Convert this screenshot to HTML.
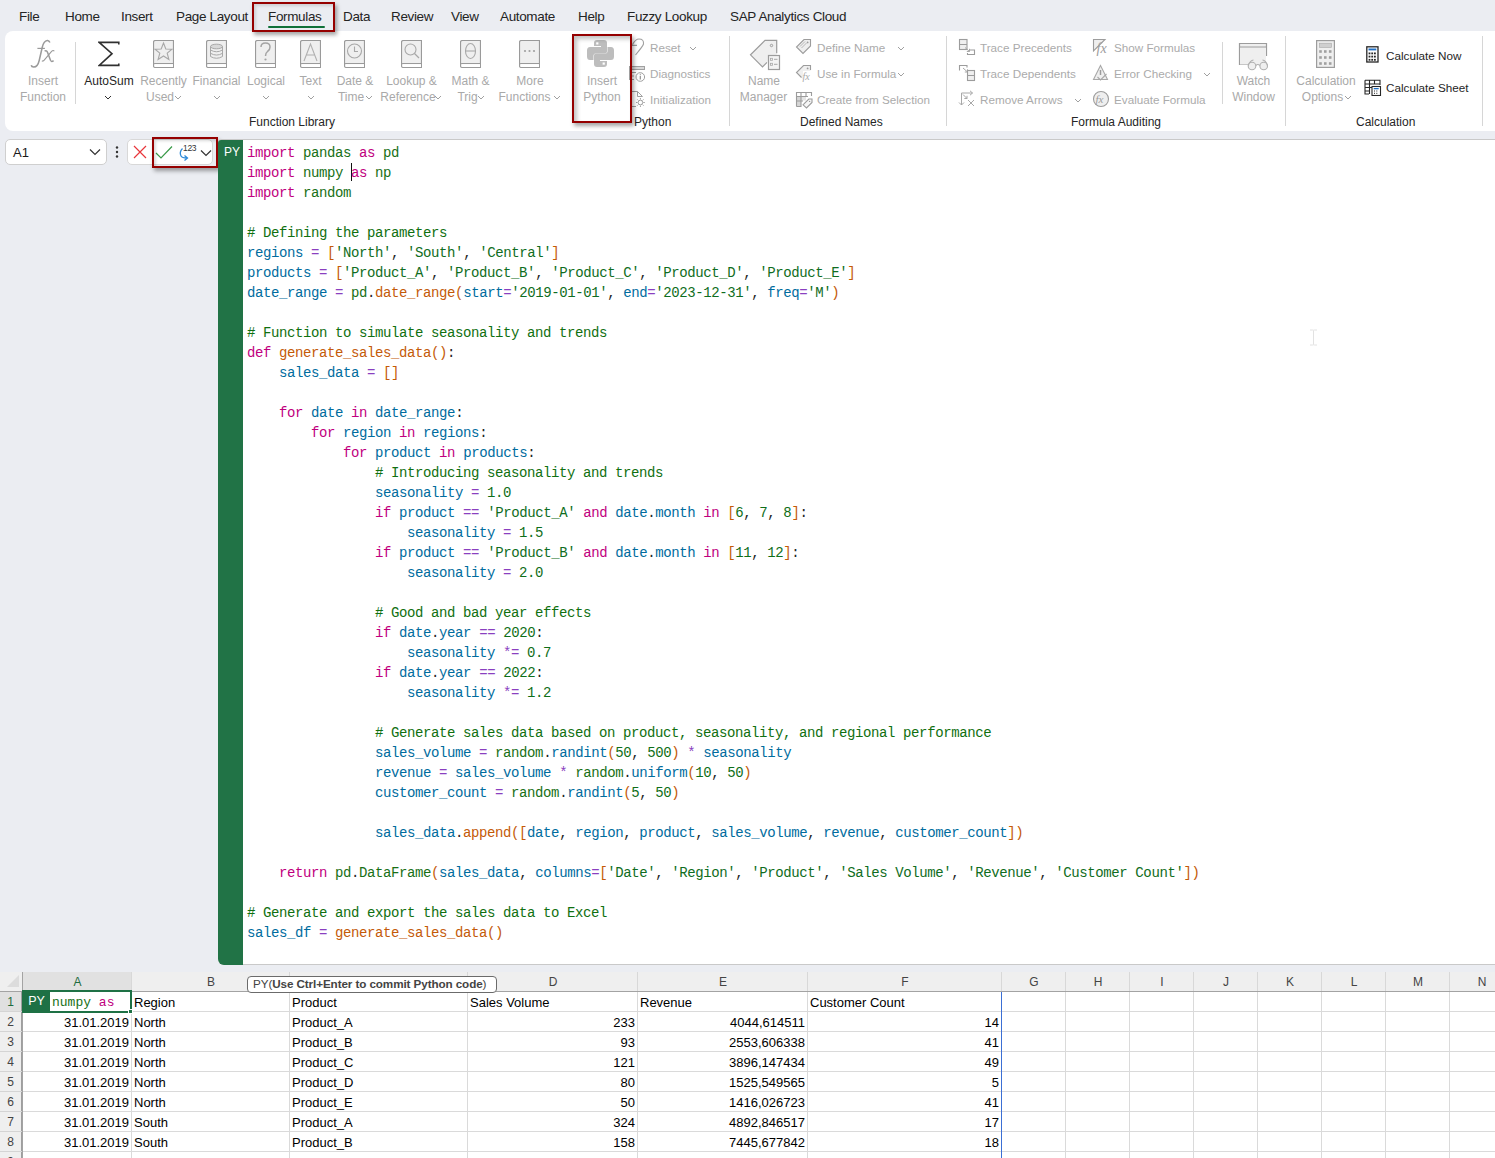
<!DOCTYPE html>
<html><head><meta charset="utf-8">
<style>
*{box-sizing:border-box;margin:0;padding:0}
html,body{width:1495px;height:1158px;overflow:hidden;background:#ebedf2;font-family:"Liberation Sans",sans-serif;color:#262626}
.abs{position:absolute}
#tabs span{position:absolute;top:9.4px;font-size:13.5px;letter-spacing:-0.35px;color:#242424;white-space:nowrap}
#ribbon{position:absolute;left:5px;top:31px;width:1500px;height:100px;background:#fff;border-radius:8px}
.lbl{position:absolute;font-size:12px;line-height:16px;white-space:nowrap;text-align:center;color:#a9a9a9}
.dark{color:#262626}
.glabel{position:absolute;top:115px;font-size:12px;color:#262626;white-space:nowrap}
.sep{position:absolute;width:1px;background:#d6d6d6}
.sitem{position:absolute;margin-top:1px;font-size:11.7px;color:#a9a9a9;white-space:nowrap}
#fbar{position:absolute;left:0;top:131px;width:1495px;height:841px;background:#ebedf2}
#editor{position:absolute;left:218px;top:139px;width:1290px;height:826px;background:#fff;border-top:1px solid #c9c9c9;border-bottom:1px solid #c9c9c9;border-top-left-radius:4px;border-bottom-left-radius:6px}
#pybar{position:absolute;left:218px;top:140px;width:25px;height:825px;background:#217346;border-top-left-radius:3px;border-bottom-left-radius:6px}
i{font-style:normal}
#code{position:absolute;left:247px;top:143px;font-family:"Liberation Mono",monospace;font-size:14px;letter-spacing:-0.4px;line-height:20px;white-space:pre;color:#262626}
.k{color:#c0007e}.v{color:#006c9e}.m{color:#187016}.s{color:#0f6d22}.c{color:#107010}.f{color:#c45a08}.o{color:#8a3fc0}.b{color:#c45a08}.n{color:#0f6e18}
#grid{position:absolute;left:0;top:972px;width:1495px;height:186px;background:#fff}
.ch{position:absolute;top:0;height:18px;background:#efefef;font-size:12px;text-align:center;line-height:21px;color:#444}
.rh{position:absolute;left:0;width:22px;height:20px;background:#efefef;border-bottom:1px solid #d4d4d4;border-right:1px solid #9e9e9e;font-size:12px;text-align:center;line-height:20px;color:#444}
.cell{position:absolute;height:20px;font-size:13px;line-height:22px;white-space:nowrap;color:#000}
.hl{position:absolute;height:1px;background:#dadada}
.vl{position:absolute;width:1px;background:#dadada}
</style></head><body>
<div id="tabs">
<span style="left:19px">File</span>
<span style="left:65px">Home</span>
<span style="left:121px">Insert</span>
<span style="left:176px">Page Layout</span>
<span style="left:268px">Formulas</span>
<span style="left:343px">Data</span>
<span style="left:391px">Review</span>
<span style="left:451px">View</span>
<span style="left:500px">Automate</span>
<span style="left:578px">Help</span>
<span style="left:627px">Fuzzy Lookup</span>
<span style="left:730px">SAP Analytics Cloud</span>
</div>
<div id="ribbon"></div>
<svg class="abs" style="left:28px;top:38px" width="30" height="32" viewBox="0 0 30 32"><path d="M21.9 4.6 Q21 2.2 19.3 2.4 Q15.6 2.8 14.2 9.5 L11.2 22.5 Q9.6 29.3 5.6 29 Q3.6 28.8 3.2 27.2" fill="none" stroke="#9a9a9a" stroke-width="1.5"/><path d="M9.4 10.4 H16.9" stroke="#9a9a9a" stroke-width="1.2"/><path d="M16.6 13.2 Q18.6 11.8 19.7 14.8 L22.5 22.3 Q23.4 24.4 25.6 22.6" fill="none" stroke="#9a9a9a" stroke-width="1.5"/><path d="M26.3 13.3 Q25.3 11.6 23.6 13.4 L16.2 22.2 Q15.1 23.6 13.9 22.7" fill="none" stroke="#9a9a9a" stroke-width="1.1"/></svg>
<div class="lbl" style="left:10px;width:66px;top:73px">Insert</div>
<div class="lbl" style="left:10px;width:66px;top:89px">Function</div>
<div class="sep" style="left:75px;top:42px;height:62px"></div>
<svg class="abs" style="left:98px;top:41px" width="22" height="26" viewBox="0 0 22 26"><path d="M20.8 3.4 V1.4 H1.2 L14 12.7 L1.2 24.4 H20.8 V22.4" fill="none" stroke="#303030" stroke-width="1.6" stroke-linejoin="miter"/></svg>
<div class="lbl dark" style="left:80px;width:58px;top:73px">AutoSum</div>
<svg class="abs" style="left:104px;top:95px" width="8" height="5"><path d="M1 1 L4 4 L7 1" fill="none" stroke="#303030" stroke-width="1"/></svg>
<svg class="abs" style="left:153px;top:40px" width="21" height="28" viewBox="0 0 21 28"><path d="M2.5 0.5 H20.5 V27.5 H2.5 Q0.5 27.5 0.5 25.5 V2.5 Q0.5 0.5 2.5 0.5 Z" fill="#efefef" stroke="#9a9a9a" stroke-width="1.2"/><path d="M0.5 24.5 Q0.5 23.5 2 23.5 H20.5" fill="none" stroke="#9a9a9a" stroke-width="1.2"/><rect x="1.5" y="24.2" width="18.5" height="2.8" fill="#fff"/><path d="M10.5 3 L12.8 9 L19 9.2 L14.2 13.2 L15.9 19.5 L10.5 16 L5.1 19.5 L6.8 13.2 L2 9.2 L8.2 9 Z" fill="none" stroke="#a8a8a8" stroke-width="1.1"/></svg>
<div class="lbl" style="left:138px;width:51px;top:73px">Recently</div>
<div class="lbl" style="left:138px;width:44px;top:89px">Used</div>
<svg class="abs" style="left:174px;top:95px" width="8" height="5"><path d="M1 1 L4 4 L7 1" fill="none" stroke="#a0a0a0" stroke-width="1"/></svg>
<svg class="abs" style="left:206px;top:40px" width="21" height="28" viewBox="0 0 21 28"><path d="M2.5 0.5 H20.5 V27.5 H2.5 Q0.5 27.5 0.5 25.5 V2.5 Q0.5 0.5 2.5 0.5 Z" fill="#efefef" stroke="#9a9a9a" stroke-width="1.2"/><path d="M0.5 24.5 Q0.5 23.5 2 23.5 H20.5" fill="none" stroke="#9a9a9a" stroke-width="1.2"/><rect x="1.5" y="24.2" width="18.5" height="2.8" fill="#fff"/><ellipse cx="10.5" cy="6.5" rx="6" ry="2.3" fill="#d8d8d8" stroke="#a8a8a8"/><path d="M4.5 6.5 V16.5 Q10.5 20 16.5 16.5 V6.5 M4.5 10 Q10.5 13.5 16.5 10 M4.5 13.3 Q10.5 16.8 16.5 13.3" fill="none" stroke="#a8a8a8"/></svg>
<div class="lbl" style="left:188px;width:57px;top:73px">Financial</div>
<svg class="abs" style="left:213px;top:95px" width="8" height="5"><path d="M1 1 L4 4 L7 1" fill="none" stroke="#a0a0a0" stroke-width="1"/></svg>
<svg class="abs" style="left:255px;top:40px" width="21" height="28" viewBox="0 0 21 28"><path d="M2.5 0.5 H20.5 V27.5 H2.5 Q0.5 27.5 0.5 25.5 V2.5 Q0.5 0.5 2.5 0.5 Z" fill="#efefef" stroke="#9a9a9a" stroke-width="1.2"/><path d="M0.5 24.5 Q0.5 23.5 2 23.5 H20.5" fill="none" stroke="#9a9a9a" stroke-width="1.2"/><rect x="1.5" y="24.2" width="18.5" height="2.8" fill="#fff"/><path d="M6 7 Q6 3 10.5 3 Q15 3 15 7 Q15 10 12.5 11.5 Q10.5 13 10.5 16" fill="none" stroke="#a4a4a4" stroke-width="1.5"/><circle cx="10.5" cy="19.5" r="1.1" fill="#a4a4a4"/></svg>
<div class="lbl" style="left:240px;width:52px;top:73px">Logical</div>
<svg class="abs" style="left:262px;top:95px" width="8" height="5"><path d="M1 1 L4 4 L7 1" fill="none" stroke="#a0a0a0" stroke-width="1"/></svg>
<svg class="abs" style="left:300px;top:40px" width="21" height="28" viewBox="0 0 21 28"><path d="M2.5 0.5 H20.5 V27.5 H2.5 Q0.5 27.5 0.5 25.5 V2.5 Q0.5 0.5 2.5 0.5 Z" fill="#efefef" stroke="#9a9a9a" stroke-width="1.2"/><path d="M0.5 24.5 Q0.5 23.5 2 23.5 H20.5" fill="none" stroke="#9a9a9a" stroke-width="1.2"/><rect x="1.5" y="24.2" width="18.5" height="2.8" fill="#fff"/><path d="M4 21 L10.5 4 L17 21 M6.5 15 H14.5" fill="none" stroke="#b0b0b0" stroke-width="1.1"/></svg>
<div class="lbl" style="left:295px;width:31px;top:73px">Text</div>
<svg class="abs" style="left:307px;top:95px" width="8" height="5"><path d="M1 1 L4 4 L7 1" fill="none" stroke="#a0a0a0" stroke-width="1"/></svg>
<svg class="abs" style="left:344px;top:40px" width="21" height="28" viewBox="0 0 21 28"><path d="M2.5 0.5 H20.5 V27.5 H2.5 Q0.5 27.5 0.5 25.5 V2.5 Q0.5 0.5 2.5 0.5 Z" fill="#efefef" stroke="#9a9a9a" stroke-width="1.2"/><path d="M0.5 24.5 Q0.5 23.5 2 23.5 H20.5" fill="none" stroke="#9a9a9a" stroke-width="1.2"/><rect x="1.5" y="24.2" width="18.5" height="2.8" fill="#fff"/><circle cx="10.5" cy="11" r="7" fill="none" stroke="#a8a8a8" stroke-width="1.1"/><path d="M10.5 6.5 V11.5 H14" fill="none" stroke="#a8a8a8" stroke-width="1.1"/></svg>
<div class="lbl" style="left:330px;width:50px;top:73px">Date &amp;</div>
<div class="lbl" style="left:330px;width:42px;top:89px">Time</div>
<svg class="abs" style="left:365px;top:95px" width="8" height="5"><path d="M1 1 L4 4 L7 1" fill="none" stroke="#a0a0a0" stroke-width="1"/></svg>
<svg class="abs" style="left:401px;top:40px" width="21" height="28" viewBox="0 0 21 28"><path d="M2.5 0.5 H20.5 V27.5 H2.5 Q0.5 27.5 0.5 25.5 V2.5 Q0.5 0.5 2.5 0.5 Z" fill="#efefef" stroke="#9a9a9a" stroke-width="1.2"/><path d="M0.5 24.5 Q0.5 23.5 2 23.5 H20.5" fill="none" stroke="#9a9a9a" stroke-width="1.2"/><rect x="1.5" y="24.2" width="18.5" height="2.8" fill="#fff"/><circle cx="9.5" cy="9.5" r="5.5" fill="none" stroke="#a8a8a8" stroke-width="1.1"/><path d="M13.5 13.5 L18 18" stroke="#a8a8a8" stroke-width="1.2"/></svg>
<div class="lbl" style="left:380px;width:63px;top:73px">Lookup &amp;</div>
<div class="lbl" style="left:378px;width:60px;top:89px">Reference</div>
<svg class="abs" style="left:434px;top:95px" width="8" height="5"><path d="M1 1 L4 4 L7 1" fill="none" stroke="#a0a0a0" stroke-width="1"/></svg>
<svg class="abs" style="left:460px;top:40px" width="21" height="28" viewBox="0 0 21 28"><path d="M2.5 0.5 H20.5 V27.5 H2.5 Q0.5 27.5 0.5 25.5 V2.5 Q0.5 0.5 2.5 0.5 Z" fill="#efefef" stroke="#9a9a9a" stroke-width="1.2"/><path d="M0.5 24.5 Q0.5 23.5 2 23.5 H20.5" fill="none" stroke="#9a9a9a" stroke-width="1.2"/><rect x="1.5" y="24.2" width="18.5" height="2.8" fill="#fff"/><ellipse cx="10.5" cy="11" rx="5" ry="7.5" fill="none" stroke="#a8a8a8" stroke-width="1.1"/><path d="M5.5 11 H15.5" stroke="#a8a8a8" stroke-width="1.1"/></svg>
<div class="lbl" style="left:445px;width:51px;top:73px">Math &amp;</div>
<div class="lbl" style="left:455px;width:25px;top:89px">Trig</div>
<svg class="abs" style="left:477px;top:95px" width="8" height="5"><path d="M1 1 L4 4 L7 1" fill="none" stroke="#a0a0a0" stroke-width="1"/></svg>
<svg class="abs" style="left:519px;top:40px" width="21" height="28" viewBox="0 0 21 28"><path d="M2.5 0.5 H20.5 V27.5 H2.5 Q0.5 27.5 0.5 25.5 V2.5 Q0.5 0.5 2.5 0.5 Z" fill="#efefef" stroke="#9a9a9a" stroke-width="1.2"/><path d="M0.5 24.5 Q0.5 23.5 2 23.5 H20.5" fill="none" stroke="#9a9a9a" stroke-width="1.2"/><rect x="1.5" y="24.2" width="18.5" height="2.8" fill="#fff"/><circle cx="6" cy="11" r="1.1" fill="#a0a0a0"/><circle cx="10.5" cy="11" r="1.1" fill="#a0a0a0"/><circle cx="15" cy="11" r="1.1" fill="#a0a0a0"/></svg>
<div class="lbl" style="left:500px;width:60px;top:73px">More</div>
<div class="lbl" style="left:495px;width:59px;top:89px">Functions</div>
<svg class="abs" style="left:553px;top:95px" width="8" height="5"><path d="M1 1 L4 4 L7 1" fill="none" stroke="#a0a0a0" stroke-width="1"/></svg>
<div class="glabel" style="left:249px">Function Library</div>
<svg class="abs" style="left:587px;top:40px" width="27" height="27" viewBox="0 0 27 27"><path d="M7 3 Q7 0 10 0 H17 Q20 0 20 3 V11.5 Q20 13.5 18 13.5 H8.5 Q6.5 13.5 6.5 15.5 V20 H3 Q0 20 0 16.5 V10.5 Q0 7 3 7 H14 V5.9 H7 Z" fill="#bdbdbd"/><path d="M7 3 Q7 0 10 0 H17 Q20 0 20 3 V11.5 Q20 13.5 18 13.5 H8.5 Q6.5 13.5 6.5 15.5 V20 H3 Q0 20 0 16.5 V10.5 Q0 7 3 7 H14 V5.9 H7 Z" fill="#bdbdbd" transform="rotate(180 13.5 13.5)"/><rect x="9.2" y="2.3" width="2.2" height="2.2" fill="#fff"/><rect x="15.6" y="22.5" width="2.2" height="2.2" fill="#fff"/></svg>
<div class="lbl" style="left:572px;width:60px;top:73px">Insert</div>
<div class="lbl" style="left:572px;width:60px;top:89px">Python</div>
<svg class="abs" style="left:629px;top:37px" width="17" height="20" viewBox="0 0 17 20"><path d="M3 8.4 H8 M3.5 7.5 Q6.5 2 10 2 Q15 2 14.5 7 Q14 9 6.5 18" fill="none" stroke="#a0a0a0" stroke-width="1.1"/></svg>
<div class="sitem" style="left:650px;top:40px;color:#ababab">Reset</div>
<svg class="abs" style="left:689px;top:46px" width="8" height="5"><path d="M1 1 L4 4 L7 1" fill="none" stroke="#a0a0a0" stroke-width="1"/></svg>
<svg class="abs" style="left:628px;top:65px" width="19" height="18" viewBox="0 0 19 18"><rect x="1.5" y="1.5" width="15" height="3" fill="#d8d8d8" stroke="#a0a0a0"/><path d="M1.5 4 V15 M1.5 7.5 H8 M1.5 11 H6 M1.5 14.5 H6" stroke="#a0a0a0"/><circle cx="12.3" cy="12" r="4.3" fill="#fff" stroke="#a0a0a0"/><path d="M12.3 10.8 V14.5" stroke="#909090" stroke-width="1.2"/><circle cx="12.3" cy="9.3" r="0.6" fill="#909090"/></svg>
<div class="sitem" style="left:650px;top:66px;color:#ababab">Diagnostics</div>
<svg class="abs" style="left:630px;top:90px" width="17" height="18" viewBox="0 0 17 18"><path d="M2 1.5 H7.5 L12.5 6.5 M7.5 1.5 V6.5 H12.5 M2 16.5 H6" fill="none" stroke="#a0a0a0"/><circle cx="10.4" cy="12.5" r="2.3" fill="none" stroke="#a0a0a0"/><path d="M10.4 8 V9.5 M10.4 15.5 V17 M6 12.5 H7.5 M13.3 12.5 H14.8 M7.3 9.4 L8.3 10.4 M12.5 14.6 L13.5 15.6 M13.5 9.4 L12.5 10.4 M8.3 14.6 L7.3 15.6" stroke="#a0a0a0"/></svg>
<div class="sitem" style="left:650px;top:92px;color:#ababab">Initialization</div>
<div class="glabel" style="left:634px">Python</div>
<div class="sep" style="left:729px;top:36px;height:90px"></div>
<svg class="abs" style="left:749px;top:39px" width="32" height="32" viewBox="0 0 32 32"><path d="M27.7 14.2 V1.4 H16 L1.5 15.8 L13.5 27.8 L19.3 22 V16.3 H27.7 Z" fill="#efefef"/><path d="M27.7 14.2 V1.4 H16 L1.5 15.8 L13.5 27.8 L18 23.3" fill="none" stroke="#9c9c9c" stroke-width="1.2"/><circle cx="22.5" cy="6.5" r="1.2" fill="none" stroke="#9c9c9c"/><rect x="19.5" y="16.5" width="11" height="14" fill="#f4f4f4" stroke="#9c9c9c" stroke-width="1.2"/><rect x="21.5" y="19.3" width="2" height="2" fill="none" stroke="#a8a8a8" stroke-width="0.8"/><rect x="21.5" y="24.3" width="2" height="2" fill="none" stroke="#a8a8a8" stroke-width="0.8"/><path d="M25 20.3 H28.5 M25 25.3 H28.5" stroke="#a8a8a8"/></svg>
<div class="lbl" style="left:738px;width:52px;top:73px">Name</div>
<div class="lbl" style="left:735px;width:57px;top:89px">Manager</div>
<svg class="abs" style="left:795px;top:38px" width="17" height="17" viewBox="0 0 17 17"><path d="M9 1.5 H15.5 V8 L8 15.5 L1.5 9 Z" fill="#efefef" stroke="#9c9c9c" stroke-width="1.1"/><circle cx="12.6" cy="4.4" r="0.9" fill="#9c9c9c"/><path d="M5 8.5 L10 3.5 M6.5 10 L11.5 5" stroke="#b0b0b0" stroke-width="0.9"/></svg>
<div class="sitem" style="left:817px;top:40px;color:#ababab">Define Name</div>
<svg class="abs" style="left:897px;top:46px" width="8" height="5"><path d="M1 1 L4 4 L7 1" fill="none" stroke="#a0a0a0" stroke-width="1"/></svg>
<svg class="abs" style="left:795px;top:64px" width="18" height="18" viewBox="0 0 18 18"><path d="M8.5 1.5 H15.5 V8 L8 15.5 L1.5 8.5 Z" fill="#efefef"/><path d="M15.5 6 V1.5 H8.5 L1.5 8.5 L6.5 13.5" fill="none" stroke="#9c9c9c" stroke-width="1.1"/><circle cx="12.6" cy="4.4" r="0.9" fill="#9c9c9c"/><rect x="8" y="7" width="10" height="11" fill="#fff"/><text x="7.5" y="16" font-family="Liberation Serif" font-style="italic" font-size="10" fill="#a8a8a8">fx</text></svg>
<div class="sitem" style="left:817px;top:66px;color:#ababab">Use in Formula</div>
<svg class="abs" style="left:897px;top:72px" width="8" height="5"><path d="M1 1 L4 4 L7 1" fill="none" stroke="#a0a0a0" stroke-width="1"/></svg>
<svg class="abs" style="left:795px;top:91px" width="18" height="18" viewBox="0 0 18 18"><rect x="1.5" y="5.5" width="4.5" height="10" fill="#d6d6d6"/><rect x="6" y="5.5" width="5" height="4" fill="#e4e4e4"/><path d="M1.5 15.5 V1.5 H16.5 V5 M1.5 5.5 H13 M1.5 10 H8 M1.5 15.5 H6.5 M6 1.5 V15.5 M11 1.5 V6" fill="none" stroke="#9c9c9c" stroke-width="1.1"/><path d="M8 13.8 L13.8 8 H17 V11.5 L11.5 17 Z" fill="#f6f6f6" stroke="#9c9c9c" stroke-width="1.1"/><circle cx="14.6" cy="10.4" r="0.7" fill="#9c9c9c"/></svg>
<div class="sitem" style="left:817px;top:92px;color:#ababab">Create from Selection</div>
<div class="glabel" style="left:800px">Defined Names</div>
<div class="glabel" style="left:1071px">Formula Auditing</div>
<div class="sep" style="left:946px;top:36px;height:90px"></div>
<svg class="abs" style="left:958px;top:38px" width="18" height="18" viewBox="0 0 18 18"><rect x="1.5" y="1.5" width="7.5" height="10" fill="#efefef" stroke="#9c9c9c" stroke-width="1.1"/><path d="M1.5 6.5 H9" stroke="#9c9c9c"/><path d="M7 9.5 L11.5 13.5 M11.5 10.8 V13.5 H8.8" fill="none" stroke="#a8a8a8"/><path d="M12 12 H16.5 V16.5 H9.5 V15" fill="none" stroke="#9c9c9c" stroke-width="1.1"/></svg>
<div class="sitem" style="left:980px;top:40px;color:#ababab">Trace Precedents</div>
<svg class="abs" style="left:958px;top:64px" width="18" height="18" viewBox="0 0 18 18"><path d="M1.5 6.5 V1.5 H9 V3.5" fill="none" stroke="#9c9c9c" stroke-width="1.1"/><path d="M5 4 L9.5 8 M9.5 5.3 V8 H6.8" fill="none" stroke="#a8a8a8"/><rect x="9.5" y="6.5" width="7" height="10" fill="#efefef" stroke="#9c9c9c" stroke-width="1.1"/><path d="M9.5 11.5 H16.5" stroke="#9c9c9c"/></svg>
<div class="sitem" style="left:980px;top:66px;color:#ababab">Trace Dependents</div>
<svg class="abs" style="left:958px;top:90px" width="18" height="18" viewBox="0 0 18 18"><path d="M3.5 3 V15 M1 12.5 L3.5 15 L6 12.5 M3.5 3 H14.5 M12 0.8 L14.5 3 L12 5.2 M5 4.5 L9 8.5 M9 5.8 V8.5 H6.3 M10 10 L16 16 M16 10 L10 16" fill="none" stroke="#a8a8a8" stroke-width="1"/></svg>
<div class="sitem" style="left:980px;top:92px;color:#ababab">Remove Arrows</div>
<svg class="abs" style="left:1074px;top:98px" width="8" height="5"><path d="M1 1 L4 4 L7 1" fill="none" stroke="#a0a0a0" stroke-width="1"/></svg>
<svg class="abs" style="left:1092px;top:38px" width="19" height="18" viewBox="0 0 19 18"><path d="M1.5 1.5 H13 L1.5 13 Z" fill="#efefef" stroke="#9c9c9c" stroke-width="1.1"/><text x="4.5" y="15" font-family="Liberation Serif" font-style="italic" font-size="14" fill="#9c9c9c">fx</text></svg>
<div class="sitem" style="left:1114px;top:40px;color:#ababab">Show Formulas</div>
<svg class="abs" style="left:1092px;top:64px" width="18" height="18" viewBox="0 0 18 18"><path d="M1.5 15.5 L8.5 1.5 L15.5 15.5 Z" fill="#efefef" stroke="#a8a8a8" stroke-width="1.1"/><path d="M8.5 6 V11" stroke="#9c9c9c" stroke-width="1.5"/><path d="M5.5 13 L8.5 16 L14.5 10" fill="none" stroke="#a8a8a8" stroke-width="1.1"/></svg>
<div class="sitem" style="left:1114px;top:66px;color:#ababab">Error Checking</div>
<svg class="abs" style="left:1203px;top:72px" width="8" height="5"><path d="M1 1 L4 4 L7 1" fill="none" stroke="#a0a0a0" stroke-width="1"/></svg>
<svg class="abs" style="left:1092px;top:90px" width="18" height="18" viewBox="0 0 18 18"><circle cx="9" cy="9" r="7.5" fill="#efefef" stroke="#9c9c9c" stroke-width="1.1"/><text x="3.5" y="13" font-family="Liberation Serif" font-style="italic" font-size="11" fill="#9c9c9c">fx</text></svg>
<div class="sitem" style="left:1114px;top:92px;color:#ababab">Evaluate Formula</div>
<div class="sep" style="left:1222px;top:42px;height:62px"></div>
<svg class="abs" style="left:1238px;top:42px" width="33" height="30" viewBox="0 0 33 30"><path d="M13 22.5 H1.5 V1.5 H28.5 V14" fill="#efefef" stroke="#9c9c9c" stroke-width="1.2"/><rect x="2" y="5.5" width="26" height="17" fill="#efefef"/><path d="M1.5 5 H28.5" stroke="#9c9c9c"/><circle cx="14" cy="24" r="3.8" fill="#efefef" stroke="#b0b0b0" stroke-width="1.1"/><circle cx="25.7" cy="24" r="3.8" fill="#efefef" stroke="#b0b0b0" stroke-width="1.1"/><path d="M10.2 23.5 Q12 18.5 15.5 18 M29.5 23.5 Q28 18.5 24.5 18 M17.8 23.5 Q19.8 21.5 21.9 23.5" fill="none" stroke="#b0b0b0" stroke-width="1.1"/></svg>
<div class="lbl" style="left:1226px;width:55px;top:73px">Watch</div>
<div class="lbl" style="left:1226px;width:55px;top:89px">Window</div>
<div class="sep" style="left:1285px;top:36px;height:90px"></div>
<svg class="abs" style="left:1316px;top:40px" width="19" height="28" viewBox="0 0 19 28"><rect x="0.6" y="0.6" width="17.8" height="26.8" fill="#efefef" stroke="#9c9c9c" stroke-width="1.2"/><rect x="3.5" y="3.2" width="12" height="4.3" fill="#cfcfcf" stroke="#a8a8a8" stroke-width="0.6"/><rect x="3.2" y="10.2" width="2.6" height="2.6" fill="#a0a0a0"/><rect x="8" y="10.2" width="2.6" height="2.6" fill="#a0a0a0"/><rect x="12.9" y="10.2" width="2.6" height="2.6" fill="#a0a0a0"/><rect x="3.2" y="16.2" width="2.6" height="2.6" fill="#a0a0a0"/><rect x="8" y="16.2" width="2.6" height="2.6" fill="#a0a0a0"/><rect x="12.9" y="16.2" width="2.6" height="2.6" fill="#a0a0a0"/><rect x="3.2" y="22.2" width="2.6" height="2.6" fill="#a0a0a0"/><rect x="8" y="22.2" width="2.6" height="2.6" fill="#a0a0a0"/><rect x="12.9" y="22.2" width="2.6" height="2.6" fill="#a0a0a0"/></svg>
<div class="lbl" style="left:1290px;width:72px;top:73px">Calculation</div>
<div class="lbl" style="left:1290px;width:65px;top:89px">Options</div>
<svg class="abs" style="left:1344px;top:95px" width="8" height="5"><path d="M1 1 L4 4 L7 1" fill="none" stroke="#a0a0a0" stroke-width="1"/></svg>
<svg class="abs" style="left:1366px;top:46px" width="13" height="17" viewBox="0 0 13 17"><rect x="0.8" y="0.8" width="11.2" height="15.2" fill="#fff" stroke="#262626" stroke-width="1.3"/><rect x="2.5" y="2.5" width="7.8" height="1.9" fill="#1f6fc5"/><rect x="2.6" y="6.5" width="1.8" height="1.8" fill="#262626"/><rect x="5.3" y="6.5" width="1.8" height="1.8" fill="#262626"/><rect x="8" y="6.5" width="1.8" height="1.8" fill="#262626"/><rect x="2.6" y="9.7" width="1.8" height="1.8" fill="#262626"/><rect x="5.3" y="9.7" width="1.8" height="1.8" fill="#262626"/><rect x="8" y="9.7" width="1.8" height="1.8" fill="#262626"/><rect x="2.6" y="12.9" width="1.8" height="1.8" fill="#262626"/><rect x="5.3" y="12.9" width="1.8" height="1.8" fill="#262626"/><rect x="8" y="12.9" width="1.8" height="1.8" fill="#262626"/></svg>
<div class="sitem" style="left:1386px;top:48px;color:#262626">Calculate Now</div>
<svg class="abs" style="left:1364px;top:79px" width="18" height="17" viewBox="0 0 18 17"><path d="M1 1.2 H16 V6 M1 1.2 V15 H5 M1 5 H16 M1 8.5 H8 M1 12 H6 M5.5 1.2 V15 M10.5 1.2 V5" fill="none" stroke="#262626" stroke-width="1.1"/><rect x="8" y="7.5" width="8.5" height="9" fill="#fff" stroke="#262626" stroke-width="1.1"/><rect x="9.7" y="9" width="5" height="1.3" fill="#1f6fc5"/><path d="M10 12 H11 M12.3 12 H13.3 M10 14.3 H11 M12.3 14.3 H13.3" stroke="#262626"/></svg>
<div class="sitem" style="left:1386px;top:80px;color:#262626">Calculate Sheet</div>
<div class="glabel" style="left:1356px">Calculation</div>
<div class="sep" style="left:1482px;top:36px;height:90px"></div>

<div id="fbar"></div>
<div class="abs" style="left:5px;top:139px;width:102px;height:26px;background:#fff;border:1px solid #cfcfcf;border-radius:5px"></div>
<div class="abs" style="left:13px;top:145px;font-size:13px;color:#1a1a1a">A1</div>
<svg class="abs" style="left:89px;top:148px" width="12" height="8"><path d="M1 1.5 L6 6.5 L11 1.5" fill="none" stroke="#333" stroke-width="1.2"/></svg>
<svg class="abs" style="left:114px;top:145px" width="6" height="14"><circle cx="3" cy="2.5" r="1.2" fill="#333"/><circle cx="3" cy="7" r="1.2" fill="#333"/><circle cx="3" cy="11.5" r="1.2" fill="#333"/></svg>
<div class="abs" style="left:127px;top:139px;width:86px;height:26px;background:#fff;border:1px solid #d8d8d8;border-radius:5px"></div>
<svg class="abs" style="left:133px;top:145px" width="14" height="14"><path d="M1 1 L13 13 M13 1 L1 13" stroke="#e8363b" stroke-width="1.2"/></svg>
<svg class="abs" style="left:155px;top:145px" width="18" height="14"><path d="M1 8 L6 13 L17 1.5" fill="none" stroke="#3a9a48" stroke-width="1.2"/></svg>
<svg class="abs" style="left:178px;top:147px" width="12" height="14"><path d="M4.5 1.5 Q1 5 3 9 Q4 11 9 11 M6.5 8.5 L9.5 11 L6.5 13.5" fill="none" stroke="#2e8ad8" stroke-width="1.3"/></svg>
<div class="abs" style="left:183px;top:143px;font-size:8.5px;line-height:10px;color:#333;letter-spacing:-0.3px">123</div>
<svg class="abs" style="left:200px;top:149px" width="12" height="8"><path d="M1 1.5 L6 6.5 L11 1.5" fill="none" stroke="#333" stroke-width="1.2"/></svg>
<div class="abs" style="left:152px;top:137px;width:66px;height:31px;border:2.5px solid #950000;box-shadow:2px 3px 4px rgba(0,0,0,0.35), inset 2px 2px 3px rgba(0,0,0,0.15)"></div>
<div class="abs" style="left:572px;top:34px;width:60px;height:89px;border:2.5px solid #950000;box-shadow:2px 3px 4px rgba(0,0,0,0.35), inset 3px 3px 4px rgba(0,0,0,0.24)"></div>
<div class="abs" style="left:252px;top:2px;width:83px;height:30px;border:2.5px solid #950000;box-shadow:2px 3px 4px rgba(0,0,0,0.35), inset 2px 2px 3px rgba(0,0,0,0.12)"></div>
<div class="abs" style="left:268px;top:26px;width:57px;height:2px;background:#0f7038;border-radius:1px"></div>

<div id="editor"></div>
<div id="pybar"></div>
<div class="abs" style="left:224px;top:145px;font-size:12px;color:#fff">PY</div>
<div class="abs" style="left:351px;top:163px;width:1px;height:18px;background:#111"></div>
<svg class="abs" style="left:1309px;top:329px" width="9" height="17"><path d="M1 1 H3.5 Q4.5 1.5 5.5 1 H8 M4.5 1.5 V15.5 M1 16 H3.5 Q4.5 15.5 5.5 16 H8" fill="none" stroke="#e2e2e2" stroke-width="1"/></svg>
<div id="code"><i class="k">import</i> <i class="m">pandas</i> <i class="k">as</i> <i class="m">pd</i>
<i class="k">import</i> <i class="m">numpy</i> <i class="k">as</i> <i class="m">np</i>
<i class="k">import</i> <i class="m">random</i>

<i class="c"># Defining the parameters</i>
<i class="v">regions</i> <i class="o">=</i> <i class="b">[</i><i class="s">&#x27;North&#x27;</i>, <i class="s">&#x27;South&#x27;</i>, <i class="s">&#x27;Central&#x27;</i><i class="b">]</i>
<i class="v">products</i> <i class="o">=</i> <i class="b">[</i><i class="s">&#x27;Product_A&#x27;</i>, <i class="s">&#x27;Product_B&#x27;</i>, <i class="s">&#x27;Product_C&#x27;</i>, <i class="s">&#x27;Product_D&#x27;</i>, <i class="s">&#x27;Product_E&#x27;</i><i class="b">]</i>
<i class="v">date_range</i> <i class="o">=</i> <i class="m">pd</i>.<i class="f">date_range</i><i class="b">(</i><i class="v">start</i><i class="o">=</i><i class="s">&#x27;2019-01-01&#x27;</i>, <i class="v">end</i><i class="o">=</i><i class="s">&#x27;2023-12-31&#x27;</i>, <i class="v">freq</i><i class="o">=</i><i class="s">&#x27;M&#x27;</i><i class="b">)</i>

<i class="c"># Function to simulate seasonality and trends</i>
<i class="k">def</i> <i class="f">generate_sales_data</i><i class="b">(</i><i class="b">)</i>:
    <i class="v">sales_data</i> <i class="o">=</i> <i class="b">[</i><i class="b">]</i>

    <i class="k">for</i> <i class="v">date</i> <i class="k">in</i> <i class="v">date_range</i>:
        <i class="k">for</i> <i class="v">region</i> <i class="k">in</i> <i class="v">regions</i>:
            <i class="k">for</i> <i class="v">product</i> <i class="k">in</i> <i class="v">products</i>:
                <i class="c"># Introducing seasonality and trends</i>
                <i class="v">seasonality</i> <i class="o">=</i> <i class="n">1.0</i>
                <i class="k">if</i> <i class="v">product</i> <i class="o">==</i> <i class="s">&#x27;Product_A&#x27;</i> <i class="k">and</i> <i class="v">date</i>.<i class="v">month</i> <i class="k">in</i> <i class="b">[</i><i class="n">6</i>, <i class="n">7</i>, <i class="n">8</i><i class="b">]</i>:
                    <i class="v">seasonality</i> <i class="o">=</i> <i class="n">1.5</i>
                <i class="k">if</i> <i class="v">product</i> <i class="o">==</i> <i class="s">&#x27;Product_B&#x27;</i> <i class="k">and</i> <i class="v">date</i>.<i class="v">month</i> <i class="k">in</i> <i class="b">[</i><i class="n">11</i>, <i class="n">12</i><i class="b">]</i>:
                    <i class="v">seasonality</i> <i class="o">=</i> <i class="n">2.0</i>

                <i class="c"># Good and bad year effects</i>
                <i class="k">if</i> <i class="v">date</i>.<i class="v">year</i> <i class="o">==</i> <i class="n">2020</i>:
                    <i class="v">seasonality</i> <i class="o">*=</i> <i class="n">0.7</i>
                <i class="k">if</i> <i class="v">date</i>.<i class="v">year</i> <i class="o">==</i> <i class="n">2022</i>:
                    <i class="v">seasonality</i> <i class="o">*=</i> <i class="n">1.2</i>

                <i class="c"># Generate sales data based on product, seasonality, and regional performance</i>
                <i class="v">sales_volume</i> <i class="o">=</i> <i class="m">random</i>.<i class="v">randint</i><i class="b">(</i><i class="n">50</i>, <i class="n">500</i><i class="b">)</i> <i class="o">*</i> <i class="v">seasonality</i>
                <i class="v">revenue</i> <i class="o">=</i> <i class="v">sales_volume</i> <i class="o">*</i> <i class="m">random</i>.<i class="v">uniform</i><i class="b">(</i><i class="n">10</i>, <i class="n">50</i><i class="b">)</i>
                <i class="v">customer_count</i> <i class="o">=</i> <i class="m">random</i>.<i class="v">randint</i><i class="b">(</i><i class="n">5</i>, <i class="n">50</i><i class="b">)</i>

                <i class="v">sales_data</i>.<i class="f">append</i><i class="b">(</i><i class="b">[</i><i class="v">date</i>, <i class="v">region</i>, <i class="v">product</i>, <i class="v">sales_volume</i>, <i class="v">revenue</i>, <i class="v">customer_count</i><i class="b">]</i><i class="b">)</i>

    <i class="k">return</i> <i class="m">pd</i>.<i class="m">DataFrame</i><i class="b">(</i><i class="v">sales_data</i>, <i class="v">columns</i><i class="o">=</i><i class="b">[</i><i class="s">&#x27;Date&#x27;</i>, <i class="s">&#x27;Region&#x27;</i>, <i class="s">&#x27;Product&#x27;</i>, <i class="s">&#x27;Sales Volume&#x27;</i>, <i class="s">&#x27;Revenue&#x27;</i>, <i class="s">&#x27;Customer Count&#x27;</i><i class="b">]</i><i class="b">)</i>

<i class="c"># Generate and export the sales data to Excel</i>
<i class="v">sales_df</i> <i class="o">=</i> <i class="f">generate_sales_data</i><i class="b">(</i><i class="b">)</i>
</div>
<div id="grid"><div class="abs" style="left:0;top:0;width:1495px;height:19px;background:#efefef"></div>
<div class="abs" style="left:23px;top:0;width:108px;height:19px;background:#e0e0e0"></div>
<svg class="abs" style="left:0;top:0" width="22" height="19"><path d="M7 15 L19 15 L19 3 Z" fill="#dcdcdc"/></svg>
<div class="ch" style="left:23px;width:109px;color:#1e6b3e;background:#e1e1e1">A</div>
<div class="abs" style="left:131px;top:0;width:1px;height:19px;background:#d8d8d8"></div>
<div class="ch" style="left:132px;width:158px;color:#444;background:#efefef">B</div>
<div class="abs" style="left:289px;top:0;width:1px;height:19px;background:#d8d8d8"></div>
<div class="ch" style="left:290px;width:178px;color:#444;background:#efefef">C</div>
<div class="abs" style="left:467px;top:0;width:1px;height:19px;background:#d8d8d8"></div>
<div class="ch" style="left:468px;width:170px;color:#444;background:#efefef">D</div>
<div class="abs" style="left:637px;top:0;width:1px;height:19px;background:#d8d8d8"></div>
<div class="ch" style="left:638px;width:170px;color:#444;background:#efefef">E</div>
<div class="abs" style="left:807px;top:0;width:1px;height:19px;background:#d8d8d8"></div>
<div class="ch" style="left:808px;width:194px;color:#444;background:#efefef">F</div>
<div class="abs" style="left:1001px;top:0;width:1px;height:19px;background:#d8d8d8"></div>
<div class="ch" style="left:1002px;width:64px;color:#444;background:#efefef">G</div>
<div class="abs" style="left:1065px;top:0;width:1px;height:19px;background:#d8d8d8"></div>
<div class="ch" style="left:1066px;width:64px;color:#444;background:#efefef">H</div>
<div class="abs" style="left:1129px;top:0;width:1px;height:19px;background:#d8d8d8"></div>
<div class="ch" style="left:1130px;width:64px;color:#444;background:#efefef">I</div>
<div class="abs" style="left:1193px;top:0;width:1px;height:19px;background:#d8d8d8"></div>
<div class="ch" style="left:1194px;width:64px;color:#444;background:#efefef">J</div>
<div class="abs" style="left:1257px;top:0;width:1px;height:19px;background:#d8d8d8"></div>
<div class="ch" style="left:1258px;width:64px;color:#444;background:#efefef">K</div>
<div class="abs" style="left:1321px;top:0;width:1px;height:19px;background:#d8d8d8"></div>
<div class="ch" style="left:1322px;width:64px;color:#444;background:#efefef">L</div>
<div class="abs" style="left:1385px;top:0;width:1px;height:19px;background:#d8d8d8"></div>
<div class="ch" style="left:1386px;width:64px;color:#444;background:#efefef">M</div>
<div class="abs" style="left:1449px;top:0;width:1px;height:19px;background:#d8d8d8"></div>
<div class="ch" style="left:1450px;width:64px;color:#444;background:#efefef">N</div>
<div class="abs" style="left:1513px;top:0;width:1px;height:19px;background:#d8d8d8"></div>
<div class="abs" style="left:0;top:19px;width:1495px;height:1px;background:#a3a3a3"></div>
<div class="abs" style="left:22px;top:0;width:1px;height:186px;background:#a3a3a3"></div>
<div class="rh" style="top:20px;background:#e0e0e0;color:#1e6b3e">1</div>
<div class="hl" style="left:23px;top:39px;width:1472px"></div>
<div class="abs" style="left:0;top:39px;width:22px;height:1px;background:#d4d4d4"></div>
<div class="rh" style="top:40px;background:#efefef;color:#444">2</div>
<div class="hl" style="left:23px;top:59px;width:1472px"></div>
<div class="abs" style="left:0;top:59px;width:22px;height:1px;background:#d4d4d4"></div>
<div class="rh" style="top:60px;background:#efefef;color:#444">3</div>
<div class="hl" style="left:23px;top:79px;width:1472px"></div>
<div class="abs" style="left:0;top:79px;width:22px;height:1px;background:#d4d4d4"></div>
<div class="rh" style="top:80px;background:#efefef;color:#444">4</div>
<div class="hl" style="left:23px;top:99px;width:1472px"></div>
<div class="abs" style="left:0;top:99px;width:22px;height:1px;background:#d4d4d4"></div>
<div class="rh" style="top:100px;background:#efefef;color:#444">5</div>
<div class="hl" style="left:23px;top:119px;width:1472px"></div>
<div class="abs" style="left:0;top:119px;width:22px;height:1px;background:#d4d4d4"></div>
<div class="rh" style="top:120px;background:#efefef;color:#444">6</div>
<div class="hl" style="left:23px;top:139px;width:1472px"></div>
<div class="abs" style="left:0;top:139px;width:22px;height:1px;background:#d4d4d4"></div>
<div class="rh" style="top:140px;background:#efefef;color:#444">7</div>
<div class="hl" style="left:23px;top:159px;width:1472px"></div>
<div class="abs" style="left:0;top:159px;width:22px;height:1px;background:#d4d4d4"></div>
<div class="rh" style="top:160px;background:#efefef;color:#444">8</div>
<div class="hl" style="left:23px;top:179px;width:1472px"></div>
<div class="abs" style="left:0;top:179px;width:22px;height:1px;background:#d4d4d4"></div>
<div class="rh" style="top:180px;background:#efefef;color:#444">9</div>
<div class="hl" style="left:23px;top:199px;width:1472px"></div>
<div class="abs" style="left:0;top:199px;width:22px;height:1px;background:#d4d4d4"></div>
<div class="vl" style="left:131px;top:20px;height:166px"></div>
<div class="vl" style="left:289px;top:20px;height:166px"></div>
<div class="vl" style="left:467px;top:20px;height:166px"></div>
<div class="vl" style="left:637px;top:20px;height:166px"></div>
<div class="vl" style="left:807px;top:20px;height:166px"></div>
<div class="vl" style="left:1065px;top:20px;height:166px"></div>
<div class="vl" style="left:1129px;top:20px;height:166px"></div>
<div class="vl" style="left:1193px;top:20px;height:166px"></div>
<div class="vl" style="left:1257px;top:20px;height:166px"></div>
<div class="vl" style="left:1321px;top:20px;height:166px"></div>
<div class="vl" style="left:1385px;top:20px;height:166px"></div>
<div class="vl" style="left:1449px;top:20px;height:166px"></div>
<div class="vl" style="left:1513px;top:20px;height:166px"></div>
<div class="abs" style="left:1001px;top:20px;width:1px;height:166px;background:#3b6fd4"></div>
<div class="cell" style="left:134px;top:20px">Region</div>
<div class="cell" style="left:292px;top:20px">Product</div>
<div class="cell" style="left:470px;top:20px">Sales Volume</div>
<div class="cell" style="left:640px;top:20px">Revenue</div>
<div class="cell" style="left:810px;top:20px">Customer Count</div>
<div class="cell" style="left:23px;width:106px;top:40px;text-align:right">31.01.2019</div>
<div class="cell" style="left:134px;top:40px">North</div>
<div class="cell" style="left:292px;top:40px">Product_A</div>
<div class="cell" style="left:468px;width:167px;top:40px;text-align:right">233</div>
<div class="cell" style="left:638px;width:167px;top:40px;text-align:right">4044,614511</div>
<div class="cell" style="left:808px;width:191px;top:40px;text-align:right">14</div>
<div class="cell" style="left:23px;width:106px;top:60px;text-align:right">31.01.2019</div>
<div class="cell" style="left:134px;top:60px">North</div>
<div class="cell" style="left:292px;top:60px">Product_B</div>
<div class="cell" style="left:468px;width:167px;top:60px;text-align:right">93</div>
<div class="cell" style="left:638px;width:167px;top:60px;text-align:right">2553,606338</div>
<div class="cell" style="left:808px;width:191px;top:60px;text-align:right">41</div>
<div class="cell" style="left:23px;width:106px;top:80px;text-align:right">31.01.2019</div>
<div class="cell" style="left:134px;top:80px">North</div>
<div class="cell" style="left:292px;top:80px">Product_C</div>
<div class="cell" style="left:468px;width:167px;top:80px;text-align:right">121</div>
<div class="cell" style="left:638px;width:167px;top:80px;text-align:right">3896,147434</div>
<div class="cell" style="left:808px;width:191px;top:80px;text-align:right">49</div>
<div class="cell" style="left:23px;width:106px;top:100px;text-align:right">31.01.2019</div>
<div class="cell" style="left:134px;top:100px">North</div>
<div class="cell" style="left:292px;top:100px">Product_D</div>
<div class="cell" style="left:468px;width:167px;top:100px;text-align:right">80</div>
<div class="cell" style="left:638px;width:167px;top:100px;text-align:right">1525,549565</div>
<div class="cell" style="left:808px;width:191px;top:100px;text-align:right">5</div>
<div class="cell" style="left:23px;width:106px;top:120px;text-align:right">31.01.2019</div>
<div class="cell" style="left:134px;top:120px">North</div>
<div class="cell" style="left:292px;top:120px">Product_E</div>
<div class="cell" style="left:468px;width:167px;top:120px;text-align:right">50</div>
<div class="cell" style="left:638px;width:167px;top:120px;text-align:right">1416,026723</div>
<div class="cell" style="left:808px;width:191px;top:120px;text-align:right">41</div>
<div class="cell" style="left:23px;width:106px;top:140px;text-align:right">31.01.2019</div>
<div class="cell" style="left:134px;top:140px">South</div>
<div class="cell" style="left:292px;top:140px">Product_A</div>
<div class="cell" style="left:468px;width:167px;top:140px;text-align:right">324</div>
<div class="cell" style="left:638px;width:167px;top:140px;text-align:right">4892,846517</div>
<div class="cell" style="left:808px;width:191px;top:140px;text-align:right">17</div>
<div class="cell" style="left:23px;width:106px;top:160px;text-align:right">31.01.2019</div>
<div class="cell" style="left:134px;top:160px">South</div>
<div class="cell" style="left:292px;top:160px">Product_B</div>
<div class="cell" style="left:468px;width:167px;top:160px;text-align:right">158</div>
<div class="cell" style="left:638px;width:167px;top:160px;text-align:right">7445,677842</div>
<div class="cell" style="left:808px;width:191px;top:160px;text-align:right">18</div>
<div class="cell" style="left:23px;width:106px;top:180px;text-align:right">31.01.2019</div>
<div class="cell" style="left:134px;top:180px">South</div>
<div class="cell" style="left:292px;top:180px">Product_C</div>
<div class="cell" style="left:468px;width:167px;top:180px;text-align:right">158</div>
<div class="cell" style="left:638px;width:167px;top:180px;text-align:right">10460,0005</div>
<div class="cell" style="left:808px;width:191px;top:180px;text-align:right">18</div>
<div class="abs" style="left:22px;top:18px;width:110px;height:23px;border:2px solid #1e7145;background:#fff"></div>
<div class="abs" style="left:22px;top:18px;width:28px;height:23px;background:#1e7145;color:#fff;font-size:12.5px;line-height:22px;text-align:center;padding-left:1px">PY</div>
<div class="abs" style="left:52px;top:21px;font-family:'Liberation Mono',monospace;font-size:13px;line-height:20px;white-space:pre"><i class="m">numpy</i> <i class="k">as</i></div>
<div class="abs" style="left:128px;top:37px;width:5px;height:5px;background:#1e7145;border:1px solid #fff"></div>
<div class="abs" style="left:247px;top:4px;width:250px;height:17px;border:1px solid #6b6b6b;border-radius:4px;background:#fff;font-size:11.7px;line-height:14px;padding-left:5px;color:#444;white-space:nowrap;letter-spacing:-0.1px">PY(<b>Use Ctrl+Enter to commit Python code</b>)</div>
</div>
</body></html>
